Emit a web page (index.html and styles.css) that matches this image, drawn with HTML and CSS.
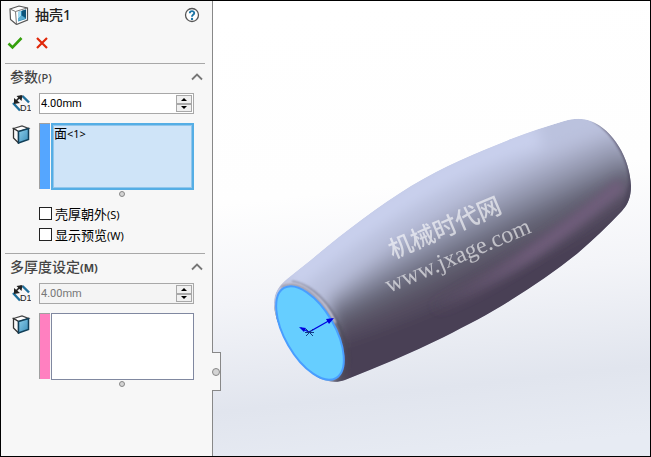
FILE: index.html
```
<!DOCTYPE html>
<html lang="zh-CN">
<head>
<meta charset="UTF-8">
<meta name="viewport" content="width=device-width, initial-scale=1.0">
<title>抽壳1</title>
<link rel="stylesheet" href="styles.css">
</head>
<body>

<!-- Общие иконки -->
<svg class="defs" width="0" height="0" aria-hidden="true">
  <defs>
    <linearGradient id="face-blue" x1="0" y1="0" x2="1" y2="1">
      <stop offset="0" stop-color="#8fd0ee"/>
      <stop offset="1" stop-color="#3a8db8"/>
    </linearGradient>
  </defs>
  <symbol id="icon-dim" viewBox="0 0 20 20">
    <path d="M11.500 2L18 8.500M2 9L9 16.500" stroke="#1f6f9c" stroke-width="2.400" fill="none"/>
    <path d="M4 8L10 2" stroke="#222" stroke-width="1.600"/>
    <path d="M5.500 2L11.500 1L10.500 7ZM3 4L3 10L9 9Z" fill="#222"/>
  </symbol>
  <symbol id="icon-face" viewBox="0 0 18 20">
    <path d="M1.500 4.500L10 2L16.500 4.500L6.500 7.500Z" fill="#fff" stroke="#444" stroke-width="1.300"/>
    <path d="M1.500 4.500L6.500 7.500V19L1.500 14Z" fill="#fafafa" stroke="#333" stroke-width="1.300"/>
    <path d="M6.500 7.500L16.500 4.500V15.500L6.500 19Z" fill="url(#face-blue)" stroke="#123f58" stroke-width="1.500"/>
  </symbol>
  <symbol id="icon-up" viewBox="0 0 12 8">
    <path d="M1 6.500L6 1.500L11 6.500" fill="none" stroke="#777" stroke-width="1.800"/>
  </symbol>
</svg>

<div class="app">
  <aside class="panel">
    <header class="panel-header">
      <div class="title-row">
        <svg class="feature-icon" viewBox="0 0 20 20" aria-hidden="true">
          <path d="M1 4L10 1L18.500 3V15L7.500 19.500L1.500 14.500Z" fill="#fff" stroke="#555" stroke-width="1.200"/>
          <path d="M1 4L6.500 6.500L7.500 19.500M6.500 6.500L18 3" fill="none" stroke="#777"/>
          <path d="M9 7L17 4.500V14L9 16.500Z" fill="#2b86b3"/>
          <path d="M13 5.800L17 4.500V13L13 10.500Z" fill="#0e5479"/>
          <path d="M9 7L12 6V11L9 14Z" fill="#a5dcf2"/>
          <path d="M12.500 10.500L16.500 13.500L9 16V14Z" fill="#5caed2"/>
        </svg>
        <h1>抽壳1</h1>
        <button type="button" class="icon-btn help" aria-label="帮助">
          <svg width="16" height="16" viewBox="0 0 16 16">
            <circle cx="8" cy="8" r="6.500" fill="#fff" stroke="#555" stroke-width="1.300"/>
            <path d="M5.800 6.300C5.800 3.300 10.300 3.500 10.200 6.100C10.100 7.800 8 7.900 8 9.700" fill="none" stroke="#1d75a5" stroke-width="1.900"/>
            <circle cx="8" cy="11.900" r="1.200" fill="#1d75a5"/>
          </svg>
        </button>
      </div>
      <div class="action-row">
        <button type="button" class="icon-btn" aria-label="确定">
          <svg width="16" height="14" viewBox="0 0 16 14"><path d="M1.500 7.500L5.500 11.500L14.500 2" fill="none" stroke="#35a00c" stroke-width="2.600"/></svg>
        </button>
        <button type="button" class="icon-btn" aria-label="取消">
          <svg width="12" height="14" viewBox="0 0 12 14"><path d="M1 2L11 12M11 2L1 12" fill="none" stroke="#e0280a" stroke-width="2.200"/></svg>
        </button>
      </div>
    </header>

    <section class="group">
      <div class="group-title">
        <h2>参数<small>(P)</small></h2>
        <button type="button" class="icon-btn" aria-label="折叠参数"><svg width="12" height="8"><use href="#icon-up"/></svg></button>
      </div>
      <div class="row">
        <svg class="row-icon" viewBox="0 0 20 20"><use href="#icon-dim"/><text x="9" y="17" class="dim-label">D1</text></svg>
        <div class="spin">
          <input type="text" id="thickness" aria-label="厚度" value="4.00mm">
          <div class="spin-buttons">
            <button type="button" class="up" aria-label="增加"></button>
            <button type="button" class="down" aria-label="减少"></button>
          </div>
        </div>
      </div>
      <div class="row">
        <svg class="row-icon"><use href="#icon-face"/></svg>
        <div class="selection">
          <span class="color-bar blue"></span>
          <ul class="list active" role="listbox" aria-label="移除的面">
            <li role="option">面<small>&lt;1&gt;</small></li>
          </ul>
        </div>
      </div>
      <div class="grip"></div>
      <div class="checks">
        <label for="outward"><input type="checkbox" id="outward"><span>壳厚朝外<small>(S)</small></span></label>
        <label for="preview"><input type="checkbox" id="preview"><span>显示预览<small>(W)</small></span></label>
      </div>
    </section>

    <section class="group">
      <div class="group-title">
        <h2>多厚度设定<small class="strong">(M)</small></h2>
        <button type="button" class="icon-btn" aria-label="折叠多厚度设定"><svg width="12" height="8"><use href="#icon-up"/></svg></button>
      </div>
      <div class="row">
        <svg class="row-icon" viewBox="0 0 20 20"><use href="#icon-dim"/><text x="9" y="17" class="dim-label">D1</text></svg>
        <div class="spin disabled">
          <input type="text" id="multi" aria-label="多厚度" value="4.00mm" disabled>
          <div class="spin-buttons">
            <button type="button" class="up" aria-label="增加"></button>
            <button type="button" class="down" aria-label="减少"></button>
          </div>
        </div>
      </div>
      <div class="row">
        <svg class="row-icon"><use href="#icon-face"/></svg>
        <div class="selection">
          <span class="color-bar pink"></span>
          <ul class="list" role="listbox" aria-label="多厚度面"></ul>
        </div>
      </div>
      <div class="grip"></div>
    </section>

    <button type="button" class="splitter" aria-label="收起面板"></button>
  </aside>

  <main class="view">
    <svg class="model" viewBox="213 1 437 455" preserveAspectRatio="xMidYMid slice">
      <defs>
        <linearGradient id="sky" gradientUnits="userSpaceOnUse" x1="400" y1="0" x2="450" y2="456">
          <stop offset="0" stop-color="#fff"/>
          <stop offset=".4" stop-color="#fefefe"/>
          <stop offset=".62" stop-color="#f3f4f8"/>
          <stop offset=".85" stop-color="#e1e5ee"/>
          <stop offset="1" stop-color="#e7ebf3"/>
        </linearGradient>
        <linearGradient id="violet" gradientUnits="userSpaceOnUse" x1="430" y1="310" x2="625" y2="185">
          <stop offset="0" stop-color="#6a5874" stop-opacity="0"/>
          <stop offset=".5" stop-color="#6d5b78"/>
          <stop offset="1" stop-color="#6f5e7b"/>
        </linearGradient>
        <filter id="soft" filterUnits="userSpaceOnUse" x="200" y="60" width="500" height="400">
          <feGaussianBlur stdDeviation="7"/>
        </filter>
        <filter id="thin" filterUnits="userSpaceOnUse" x="200" y="60" width="500" height="400">
          <feGaussianBlur stdDeviation="1.300"/>
        </filter>
        <filter id="mid" filterUnits="userSpaceOnUse" x="200" y="60" width="500" height="400">
          <feGaussianBlur stdDeviation="4"/>
        </filter>
        <path id="outline" d="M274 303C274 292 279 286 287 279C295 273 303 266 311 260C343 233 377 207 411 186C444 166 478 152 511 139C529 132 547 126 564 121C574 118 583 118 591 121C613 130 630 158 631 186C631 197 628 204 622 211C608 226 593 240 578 253C557 270 534 286 511 300C489 314 467 325 444 337C411 353 378 367 345 380C337 383 327 382 319 378C298 365 274 327 274 303Z"/>
        <clipPath id="body-clip"><use href="#outline"/></clipPath>
      </defs>

      <rect x="213" y="1" width="437" height="455" fill="url(#sky)"/>

      <!-- Корпус: слои от светлого к тёмному -->
      <g clip-path="url(#body-clip)">
        <use href="#outline" fill="#bbc2de"/>
        <g filter="url(#soft)">
          <path d="M290 282Q430 165 540 136" fill="none" stroke="#c9d0ed" stroke-width="24"/>
          <path d="M322 290Q430 185 600 128L660 130V300L330 440Z" fill="#bac0dc"/>
          <path d="M326 296Q435 198 606 134L660 130V300L330 440Z" fill="#abb0ca"/>
          <path d="M328 300Q440 212 612 144L660 150V300L330 440Z" fill="#999db5"/>
          <path d="M330 305Q444 227 616 156L660 160V300L330 440Z" fill="#85889d"/>
          <path d="M332 311Q448 242 620 166L660 170V300L330 440Z" fill="#717286"/>
          <path d="M334 318Q450 258 625 174L660 180V300L330 440Z" fill="#605e70"/>
          <path d="M338 328Q460 276 630 188L660 200V300L340 440Z" fill="#544e61"/>
          <path d="M340 342Q460 305 630 206L660 210V300L340 440Z" fill="#483f55"/>
        </g>
        <path d="M425 313C495 282 560 235 622 184" fill="none" stroke="url(#violet)" stroke-width="14" filter="url(#mid)"/>
        <path d="M594 119C619 135 632 165 631 184L625 208" fill="none" stroke="#4a4258" stroke-width="5" opacity=".6" filter="url(#thin)"/>
        <!-- Скругление у торца -->
        <path d="M292 282C326 288 348 335 349 362Q345 382 330 384" fill="none" stroke="#45424f" stroke-width="3" opacity=".45" filter="url(#thin)"/>
        <path d="M280 286C300 275 326 302 335 323" fill="none" stroke="#c9c9dc" stroke-width="3" filter="url(#thin)"/>
        <path d="M281 287C304 277 327 306 339 334" fill="none" stroke="#817d8b" stroke-width="2" opacity=".7" filter="url(#thin)"/>
        <path d="M273 304C274 325 298 367 323 381" fill="none" stroke="#555e70" stroke-width="2"/>
      </g>

      <ellipse cx="310" cy="333" rx="52" ry="25" transform="rotate(60 310 333)" fill="#66ceff" stroke="#499eff" stroke-width="2"/>

      <g stroke="#0000e0" fill="#0000e0">
        <path d="M301 328L309 332L332 319" fill="none" stroke-width="1.200"/>
        <path d="M334 318L326 319L329 324ZM299 327L306 328L304 332Z" stroke="none"/>
        <path d="M306 329L313 336M313 329L306 336M305 332.500H314" fill="none" stroke="#133a85"/>
      </g>

      <g class="watermark">
        <text x="393" y="259" transform="rotate(-23 393 259)" class="mark-cn">机械时代网</text>
        <text x="389" y="293" transform="rotate(-23 389 293)" class="mark-url">www.jxage.com</text>
      </g>
    </svg>
  </main>
</div>

</body>
</html>
```
FILE: styles.css
```
* {
  box-sizing: border-box;
}

body {
  margin: 0;
  font-family: "Noto Sans", "Noto Sans CJK SC", sans-serif;
  font-size: 13px;
  color: #000;
}

h1, h2, ul {
  margin: 0;
  padding: 0;
}

button {
  padding: 0;
  font: inherit;
}

small {
  font-size: 11px;
}

.defs {
  position: absolute;
}

.app {
  display: flex;
  height: 100vh;
  border: 1px solid #000;
}

.panel {
  position: relative;
  flex: 0 0 212px;
  min-width: 0;
  background: #f7f7f7;
  border-right: 1px solid #888;
}

.panel-header {
  height: 62px;
  padding: 0 12px 0 6px;
}

.title-row {
  display: flex;
  align-items: center;
  height: 28px;
  padding-left: 2px;
  gap: 6px;
}

.feature-icon {
  width: 20px;
  height: 20px;
}

h1 {
  flex: 1;
  font-size: 14px;
  font-weight: 500;
  line-height: 20px;
  color: #222;
}

.icon-btn {
  display: flex;
  border: 0;
  background: none;
}

.action-row {
  display: flex;
  align-items: center;
  height: 28px;
  gap: 13px;
}

.group {
  margin: 0 7px 0 4px;
  border-top: 1px solid #a8a8a8;
}

.group-title {
  display: flex;
  align-items: center;
  justify-content: space-between;
  height: 29px;
  padding: 0 2px 3px 5px;
}

h2 {
  font-size: 14px;
  font-weight: 500;
  line-height: 20px;
  color: #444;
}

.strong {
  font-weight: 700;
}

.row {
  display: flex;
  gap: 8px;
  padding: 0 11px 0 6px;
  margin-bottom: 9px;
}

.row-icon {
  flex: none;
  width: 20px;
  height: 20px;
  margin-top: 1px;
}

.dim-label {
  font-family: "Liberation Sans", sans-serif;
  font-size: 9px;
  fill: #222;
}

.spin {
  display: flex;
  flex: 1;
  min-width: 0;
  height: 21px;
  padding: 1px;
  background: #fff;
  border: 1px solid #a8a8a8;
}

.spin input {
  flex: 1;
  min-width: 0;
  padding: 0;
  border: 0;
  background: none;
  font-family: Roboto, sans-serif;
  font-size: 11px;
  color: #000;
}

.spin.disabled {
  background: #f4f4f4;
}

.spin.disabled input {
  color: #777;
}

.spin-buttons {
  display: flex;
  flex-direction: column;
  width: 16px;
}

.spin-buttons button {
  display: flex;
  flex: 1;
  align-items: center;
  justify-content: center;
  min-height: 0;
  border: 1px solid #a8a8a8;
  background: #f0f0f0;
}

.spin-buttons button::before {
  content: "";
  border: 3px solid transparent;
}

.spin-buttons .up::before {
  border-top-width: 0;
  border-bottom-color: #000;
}

.spin-buttons .down::before {
  border-bottom-width: 0;
  border-top-color: #000;
}

.selection {
  display: flex;
  flex: 1;
  gap: 1px;
  height: 67px;
}

.color-bar {
  width: 11px;
  margin-bottom: 1px;
  border: solid #a0a0a0;
  border-width: 1px 0 0 1px;
}

.blue {
  background: #55a6ff;
}

.pink {
  background: #ff80c0;
}

.list {
  flex: 1;
  padding: 1px 2px;
  list-style: none;
  line-height: 16px;
  background: #fff;
  border: 1px solid #8088a0;
}

.list.active {
  padding: 0 1px;
  background: #cfe4f8;
  border: 2px solid #55aee5;
  box-shadow: inset 0 0 0 1px #91c6ec;
}

.grip {
  width: 6px;
  height: 6px;
  margin: -8px 0 0 114px;
  border: 1px solid #888;
  border-radius: 50%;
  background: #d4d4d4;
}

.checks {
  padding: 6px 0 8px 34px;
}

.checks label {
  display: flex;
  align-items: center;
  height: 21px;
  gap: 3px;
}

.checks input {
  appearance: none;
  width: 13px;
  height: 13px;
  margin: 0;
  border: 1px solid #222;
  background: #fff;
}

.checks input:checked {
  background: #333;
}

/* ручка на границе панели и вида */
.splitter {
  position: absolute;
  top: 351px;
  right: -9px;
  display: flex;
  align-items: center;
  justify-content: center;
  width: 9px;
  height: 39px;
  border: 1px solid #888;
  border-left: 0;
  background: #f7f7f7;
}

.splitter::before {
  content: "";
  flex: none;
  width: 6px;
  height: 6px;
  border: 1px solid #888;
  border-radius: 50%;
  background: #d4d4d4;
}

.view {
  flex: 1;
  min-width: 0;
}

.model {
  display: block;
  width: 100%;
  height: 100%;
}

.watermark {
  fill: #fff;
  opacity: .6;
}

.mark-cn {
  font-family: "Noto Sans CJK SC", sans-serif;
  font-size: 24px;
  font-weight: 500;
}

.mark-url {
  font-family: "Liberation Serif", serif;
  font-size: 24px;
}
```
